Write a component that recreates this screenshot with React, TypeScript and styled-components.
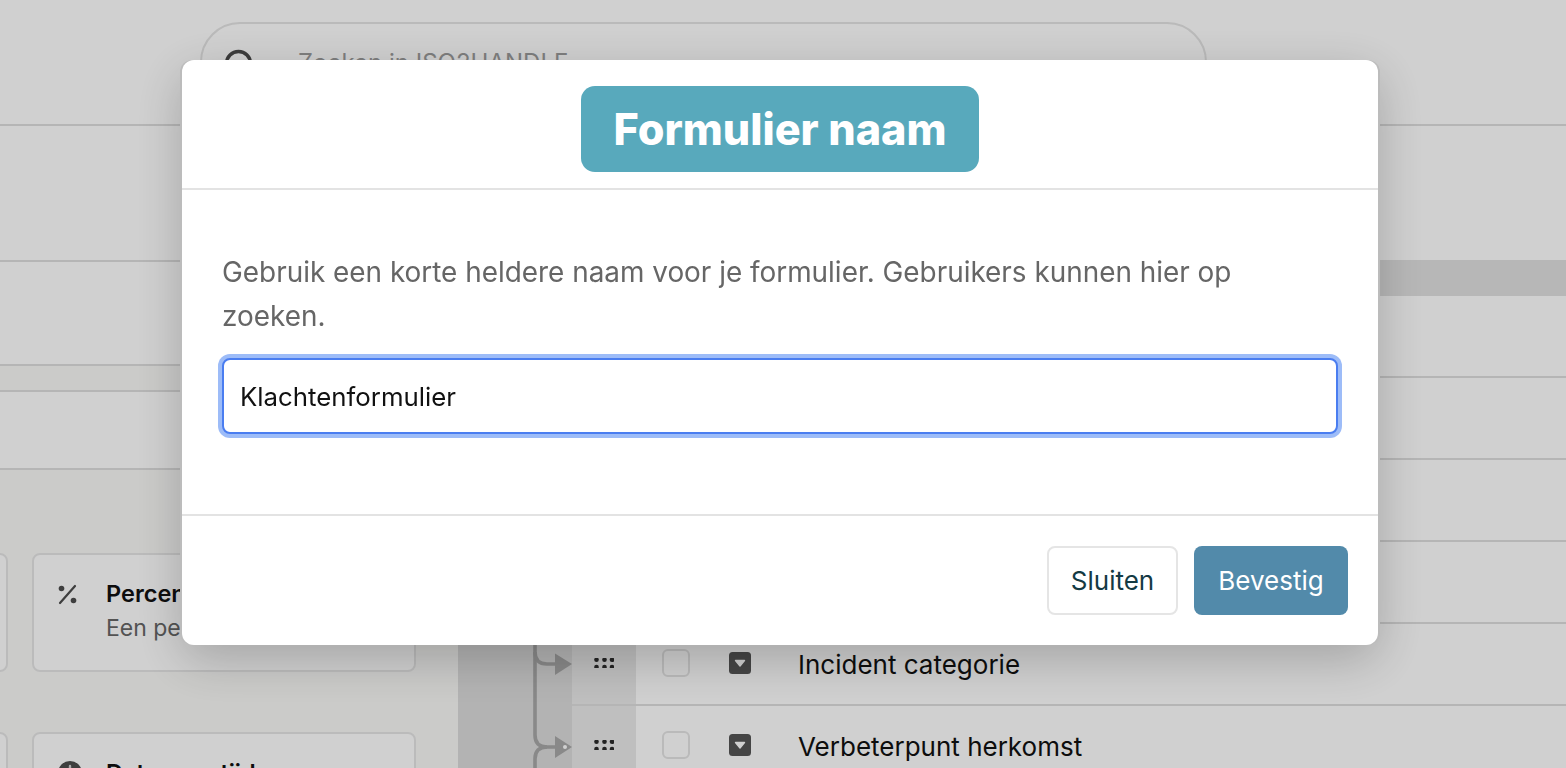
import React from "react";
import styled, { createGlobalStyle } from "styled-components";
import { Search } from "lucide-react";

const GlobalStyle = createGlobalStyle`
  html, body {
    margin: 0;
    height: 100%;
    overflow: hidden;
    background: #fff;
    font-family: Inter, "Liberation Sans", sans-serif;
    color: #111;
  }
  * { box-sizing: border-box; }
`;

const LINE = "#dedede";
const FLOW = "#a8a8a8";

const DragDots = () => (
  <svg width="20" height="10" viewBox="0 0 20 10" fill="#2c2c2c">
    {[2.5, 10.5, 18].map((x) =>
      [1.8, 9].map((y) => <circle key={`${x}-${y}`} cx={x} cy={y} r="2.3" />)
    )}
  </svg>
);

const SelectIcon = () => (
  <svg width="22" height="22" viewBox="0 0 22 22">
    <rect width="22" height="22" rx="3.5" fill="#555" />
    <path d="M6.5 8.5h9l-4.5 5.5z" fill="#fff" stroke="#fff" strokeWidth="1.4" strokeLinejoin="round" />
  </svg>
);

const PercentIcon = () => (
  <svg width="19" height="24" viewBox="0 -3 19 24" fill="#4c4c4c">
    <path d="M17 1 2 18" stroke="#4c4c4c" strokeWidth="2.2" strokeLinecap="round" />
    <circle cx="3.500" cy="3.500" r="2.800" />
    <circle cx="15.500" cy="15.500" r="2.800" />
  </svg>
);

const ClockIcon = () => (
  <svg width="24" height="24" viewBox="0 0 24 24">
    <circle cx="12" cy="12" r="12" fill="#4c4c4c" />
    <path d="M12 5v8" stroke="#d0d0d0" strokeWidth="2.4" strokeLinecap="round" />
  </svg>
);

const ConnectorIn = () => (
  <svg width="114" height="82" viewBox="0 0 114 82" fill="none" stroke={FLOW} strokeWidth="3.6">
    <path d="M77 0v82" />
    <path d="M77 28q0 12 12 12h10" />
    <path d="M97 29.500 114 40 97 51z" fill={FLOW} stroke="none" />
  </svg>
);

const ConnectorOut = () => (
  <svg width="114" height="82" viewBox="0 0 114 82" fill="none" stroke={FLOW} strokeWidth="3.6">
    <path d="M77 0v29q0 12 12 12h10" />
    <path d="M77 82V53q0-12 12-12" />
    <path d="M97 30 114 41 97 52z" fill={FLOW} stroke="none" />
    <circle cx="107" cy="41" r="2" fill="#fff" stroke="none" />
  </svg>
);

type CardInfo = { icon?: React.ReactNode; title?: string; text?: string };

const firstCards: CardInfo[] = [
  {},
  { icon: <PercentIcon />, title: "Percentage", text: "Een percentage" },
  {},
  { icon: <ClockIcon />, title: "Datum en tijd", text: "Een datum en tijd" },
];

const rows = [
  { title: "", dots: false },
  { title: "", dots: false },
  { title: "", dots: false },
  { title: "", dots: false },
  { title: "Incident categorie", dots: true, connector: <ConnectorIn /> },
  { title: "Verbeterpunt herkomst", dots: true, connector: <ConnectorOut /> },
];

export default function App() {
  return (
    <>
      <GlobalStyle />
      <Page>
        <Header>
          <SearchBox>
            <SearchGlyph>
              <Search size={36} strokeWidth={2.3} color="#4a4a4a" />
            </SearchGlyph>
            <SearchText>Zoeken in ISO2HANDLE</SearchText>
          </SearchBox>
        </Header>
        <Main>
          <LeftColumn>
            <LeftBlock $height={136} />
            <LeftBlock $height={104} />
            <LeftBlock $height={26} $tinted />
            <LeftBlock $height={78} />
            <CardArea>
              {firstCards.map((card, i) => (
                <Card key={i}>
                  {card.icon && <CardIcon>{card.icon}</CardIcon>}
                  <div>
                    <CardTitle>{card.title}</CardTitle>
                    <CardText>{card.text}</CardText>
                  </div>
                </Card>
              ))}
            </CardArea>
          </LeftColumn>
          <RightColumn>
            <TopBlock />
            <ListHeader />
            {rows.map((row, i) => (
              <Row key={i}>
                <Gutter>{row.connector}</Gutter>
                <RowBody>
                  <Handle>{row.dots && <DragDots />}</Handle>
                  {row.title && (
                    <>
                      <Check />
                      <TypeIcon>
                        <SelectIcon />
                      </TypeIcon>
                      <RowTitle>{row.title}</RowTitle>
                    </>
                  )}
                </RowBody>
              </Row>
            ))}
          </RightColumn>
        </Main>
      </Page>

      <Overlay>
        <Modal>
          <ModalHeader>
            <TitlePill>Formulier naam</TitlePill>
          </ModalHeader>
          <ModalBody>
            <Intro>
              Gebruik een korte heldere naam voor je formulier. Gebruikers kunnen hier op zoeken.
            </Intro>
            <NameInput readOnly value="Klachtenformulier" />
          </ModalBody>
          <ModalFooter>
            <CloseButton>Sluiten</CloseButton>
            <ConfirmButton>Bevestig</ConfirmButton>
          </ModalFooter>
        </Modal>
      </Overlay>
    </>
  );
}

const Page = styled.div`
  height: 768px;
  overflow: hidden;
  display: flex;
  flex-direction: column;
`;

const Header = styled.header`
  height: 126px;
  flex: none;
  padding: 22px 359px 0 200px;
  border-bottom: 2px solid ${LINE};
`;

const SearchBox = styled.div`
  height: 80px;
  border: 2px solid #e4e4e4;
  border-radius: 40px;
  display: flex;
  align-items: center;
  padding-left: 20px;
`;

const SearchGlyph = styled.span`
  display: flex;
  width: 76px;
  margin-top: 5px;
`;

const SearchText = styled.span`
  font-size: 24px;
  color: #9c9c9c;
`;

const Main = styled.div`
  flex: 1;
  display: flex;
  min-height: 0;
`;

const LeftColumn = styled.div`
  width: 458px;
  flex: none;
  display: flex;
  flex-direction: column;
`;

const LeftBlock = styled.div<{ $height: number; $tinted?: boolean }>`
  height: ${(p) => p.$height}px;
  flex: none;
  border-bottom: 2px solid ${LINE};
  background: ${(p) => (p.$tinted ? "#f9f9f7" : "#fff")};
`;

const CardArea = styled.div`
  flex: 1;
  background: #f9f9f7;
  display: grid;
  grid-template-columns: 384px 384px;
  grid-auto-rows: 119px;
  column-gap: 24px;
  row-gap: 60px;
  margin-left: -376px;
  padding-top: 83px;
`;

const Card = styled.div`
  background: #fff;
  border: 2px solid #e6e6e6;
  border-radius: 8px;
  display: flex;
  padding: 24px 0 0 24px;
`;

const CardIcon = styled.span`
  width: 48px;
  flex: none;
  padding-top: 3px;
`;

const CardTitle = styled.div`
  font-size: 23.5px;
  font-weight: 600;
  line-height: 30px;
  color: #111;
`;

const CardText = styled.div`
  font-size: 23px;
  line-height: 38px;
  color: #666;
`;

const RightColumn = styled.div`
  flex: 1;
  min-width: 0;
  display: flex;
  flex-direction: column;
`;

const TopBlock = styled.div`
  height: 134px;
  flex: none;
`;

const ListHeader = styled.div`
  height: 36px;
  flex: none;
  background: #e1e1e1;
`;

const Row = styled.div`
  height: 82px;
  flex: none;
  display: flex;
`;

const Gutter = styled.div`
  width: 114px;
  flex: none;
  background: #dcdcdc;
  svg {
    display: block;
  }
`;

const RowBody = styled.div`
  flex: 1;
  display: flex;
  align-items: center;
  border-bottom: 2px solid ${LINE};
`;

const Handle = styled.div`
  width: 64px;
  height: 100%;
  flex: none;
  background: #eaeaea;
  display: flex;
  align-items: center;
  justify-content: center;
  padding-bottom: 3px;
`;

const Check = styled.span`
  width: 28px;
  height: 28px;
  flex: none;
  margin-left: 26px;
  margin-bottom: 3px;
  border: 2px solid #e4e4e4;
  border-radius: 6px;
  background: #fff;
`;

const TypeIcon = styled.span`
  display: flex;
  margin-left: 39px;
  margin-bottom: 2px;
`;

const RowTitle = styled.span`
  margin-left: 47px;
  font-size: 26px;
  color: #111;
`;

const Overlay = styled.div`
  position: fixed;
  inset: 0;
  background: rgba(0, 0, 0, 0.185);
  display: flex;
  justify-content: center;
  align-items: flex-start;
  padding: 60px 6px 0 0;
`;

const Modal = styled.div`
  width: 1196px;
  height: 585px;
  background: #fff;
  border-radius: 12px;
  display: flex;
  flex-direction: column;
  box-shadow: -2px 0 0 #bcbcbc, 2px 0 0 #bcbcbc, 0 14px 50px rgba(0, 0, 0, 0.22);
`;

const ModalHeader = styled.div`
  height: 130px;
  flex: none;
  border-bottom: 2px solid #e3e3e3;
  display: flex;
  justify-content: center;
  padding-top: 26px;
`;

const TitlePill = styled.h1`
  margin: 0;
  width: 398px;
  height: 86px;
  border-radius: 14px;
  background: #58a9bc;
  color: #fff;
  font-size: 43.2px;
  font-weight: 800;
  line-height: 86px;
  text-align: center;
`;

const ModalBody = styled.div`
  height: 326px;
  flex: none;
  border-bottom: 2px solid #e3e3e3;
  padding: 60px 40px 0;
`;

const Intro = styled.p`
  margin: 0 0 20px;
  max-width: 1090px;
  font-size: 27.9px;
  line-height: 44px;
  color: #666;
`;

const NameInput = styled.input`
  display: block;
  width: 100%;
  height: 76px;
  padding: 0 16px;
  border: 2px solid #4a7df0;
  border-radius: 8px;
  box-shadow: 0 0 0 4px #9dbcf8;
  outline: none;
  font-family: inherit;
  font-size: 25.8px;
  color: #111;
`;

const ModalFooter = styled.div`
  flex: 1;
  display: flex;
  justify-content: flex-end;
  align-items: flex-start;
  gap: 16px;
  padding: 30px 30px 0 0;
`;

const CloseButton = styled.button`
  width: 131px;
  height: 69px;
  border: 2px solid #e5e5e5;
  border-radius: 8px;
  background: #fff;
  color: #143a44;
  font-family: inherit;
  font-size: 26px;
`;

const ConfirmButton = styled.button`
  width: 154px;
  height: 69px;
  border: none;
  border-radius: 8px;
  background: #528aaa;
  color: #fff;
  font-family: inherit;
  font-size: 26px;
`;
